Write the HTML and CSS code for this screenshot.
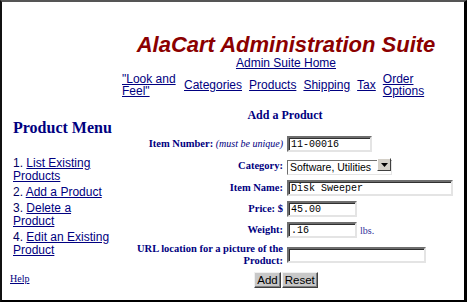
FILE: index.html
```html
<!doctype html>
<html>

<head>
  <title>AlaCart Administration Suite - Add a Product</title>
  <link rel="stylesheet" href="styles.css">
</head>

<body>
  <div class="frame">
    <header class="masthead">
      <h1 class="suite-title">AlaCart Administration Suite</h1>
      <a class="home-link" href="#">Admin Suite Home</a>
      <nav class="main-nav">
        <a href="#" class="look-feel">"Look and Feel"</a>
        <a href="#">Categories</a>
        <a href="#">Products</a>
        <a href="#">Shipping</a>
        <a href="#">Tax</a>
        <a href="#" class="order-options">Order Options</a>
      </nav>
    </header>

    <div class="columns">
      <aside class="sidebar">
        <h2 class="menu-title">Product Menu</h2>
        <ol class="menu">
          <li><span class="num">1.</span> <a href="#">List Existing Products </a></li>
          <li><span class="num">2.</span> <a href="#">Add a Product </a></li>
          <li><span class="num">3.</span> <a href="#">Delete a Product</a></li>
          <li><span class="num">4.</span> <a href="#">Edit an Existing Product</a></li>
        </ol>
        <a class="help" href="#">Help</a>
      </aside>

      <main class="content">
        <h3 class="form-title">Add a Product</h3>
        <form class="product-form" method="post" action="#">
          <label for="item-number">Item Number: <em>(must be unique)</em></label>
          <div class="field"><input type="text" id="item-number" class="text w-84" value="11-00016"></div>

          <label for="category">Category:</label>
          <div class="field">
            <span class="select-wrap">
              <select id="category" class="select">
                <option>Software, Utilities</option>
              </select>
              <span class="select-btn">
                <svg width="7" height="4" viewBox="0 0 7 4"><path d="M0 0h7L3.5 4z" fill="#000"/></svg>
              </span>
            </span>
          </div>

          <label for="item-name">Item Name:</label>
          <div class="field"><input type="text" id="item-name" class="text w-165" value="Disk Sweeper"></div>

          <label for="price">Price: $</label>
          <div class="field"><input type="text" id="price" class="text w-69" value="45.00"></div>

          <label for="weight">Weight:</label>
          <div class="field"><input type="text" id="weight" class="text w-69" value=".16"><span class="unit">lbs.</span></div>

          <label for="picture">URL location for a picture of the Product:</label>
          <div class="field"><input type="text" id="picture" class="text w-138" value=""></div>

          <div class="form-actions">
            <button type="button" class="btn">Add</button>
            <button type="reset" class="btn">Reset</button>
          </div>
        </form>
      </main>
    </div>
  </div>
</body>

</html>
```

FILE: styles.css
```css
html {
  font-family: "Liberation Sans", Arial, sans-serif;
}

body {
  margin: 0;
  background: white;
}

a {
  color: #000080;
}

.frame {
  box-sizing: border-box;
  height: 302px;
  border-top: 2px solid #555;
  border-left: 2px solid #111;
  border-right: 3px solid #000;
  border-bottom: 2px solid #000;
}

/* header */
.masthead {
  padding: 32px 0 0 106px;
  text-align: center;
}

.suite-title {
  margin: 0;
  font-size: 22px;
  line-height: 22px;
  font-style: italic;
  font-weight: bold;
  color: #8b0000;
}

.home-link {
  display: block;
  font-size: 12px;
  line-height: 14px;
  width: max-content;
  margin: 0 auto;
}

.main-nav {
  display: flex;
  align-items: center;
  gap: 7px;
  margin: 3px 0 0 14px;
  font-size: 12px;
  line-height: 12px;
  text-align: left;
}

.look-feel {
  width: 55px;
}

.order-options {
  width: 42px;
}

/* body columns */
.columns {
  display: flex;
}

.sidebar {
  width: 133px;
  padding: 22px 0 0 8px;
  box-sizing: border-box;
}

.menu-title {
  margin: 0 0 0 3px;
  font-family: "Liberation Serif", "Times New Roman", serif;
  font-size: 16px;
  line-height: 18px;
  color: #000080;
}

.menu {
  list-style: none;
  margin: 20px 0 0 3px;
  padding: 0;
  width: 100px;
  font-size: 12px;
  line-height: 13px;
  color: #000060;
  display: flex;
  flex-direction: column;
  gap: 3px;
}

.help {
  display: block;
  margin-top: 16px;
  font-family: "Liberation Serif", "Times New Roman", serif;
  font-size: 10px;
  line-height: 12px;
}

.content {
  flex: 1;
  padding-top: 11px;
}

.form-title {
  margin: 0;
  width: 300px;
  text-align: center;
  font-family: "Liberation Serif", "Times New Roman", serif;
  font-size: 12px;
  line-height: 14px;
  color: #000080;
}

/* form grid */
.product-form {
  display: grid;
  grid-template-columns: 148px auto;
  grid-auto-rows: minmax(16px, auto);
  column-gap: 4px;
  row-gap: 5px;
  align-items: center;
  margin-top: 14px;
}

.product-form label {
  text-align: right;
  font-family: "Liberation Serif", "Times New Roman", serif;
  font-weight: bold;
  font-size: 10.5px;
  line-height: 12px;
  color: #000080;
}

.product-form em {
  font-weight: normal;
  font-size: 10px;
}

.field {
  display: flex;
  align-items: center;
}

.text {
  box-sizing: border-box;
  height: 16px;
  padding: 0 2px;
  margin: 0;
  font-family: "Liberation Mono", "Courier New", monospace;
  font-size: 10px;
  color: #000;
  background: white;
  border: 2px solid;
  border-color: #6e6e6e #e4e4e4 #e4e4e4 #6e6e6e;
  box-shadow: inset 1px 1px 0 #303030;
  outline: none;
}

.w-84 { width: 85px; }
.w-165 { width: 166px; }
.w-69 { width: 70px; }
.w-138 { width: 139px; }

.unit {
  margin-left: 3px;
  font-family: "Liberation Serif", "Times New Roman", serif;
  font-size: 10px;
  color: #33339a;
}

.select-wrap {
  position: relative;
  display: inline-block;
}

.select {
  appearance: none;
  box-sizing: border-box;
  width: 105px;
  height: 15px;
  margin: 0;
  padding: 0 0 0 2px;
  font-family: "Liberation Sans", Arial, sans-serif;
  font-size: 10.5px;
  line-height: 11px;
  color: #000;
  background: white;
  border: 1px solid #6e6e6e;
  border-right-color: #e4e4e4;
  border-bottom-color: #e4e4e4;
  border-radius: 0;
}

.select-btn {
  position: absolute;
  top: 1px;
  right: 1px;
  width: 14px;
  height: 13px;
  box-sizing: border-box;
  background: #d4d0c8;
  border: 1px solid;
  border-color: #fff #404040 #404040 #fff;
  display: flex;
  align-items: center;
  justify-content: center;
}

.form-actions {
  grid-column: 1 / -1;
  width: 302px;
  display: flex;
  justify-content: center;
  gap: 1px;
  margin-top: -1px;
}

.btn {
  box-sizing: border-box;
  height: 16px;
  padding: 0 2px;
  margin: 0;
  font-family: "Liberation Sans", Arial, sans-serif;
  font-size: 11.5px;
  line-height: 12px;
  color: #000;
  background: #c8c8c8;
  border: 1px solid;
  border-color: #f0f0f0 #404040 #404040 #f0f0f0;
  box-shadow: inset -1px -1px 0 #808080;
}
```
